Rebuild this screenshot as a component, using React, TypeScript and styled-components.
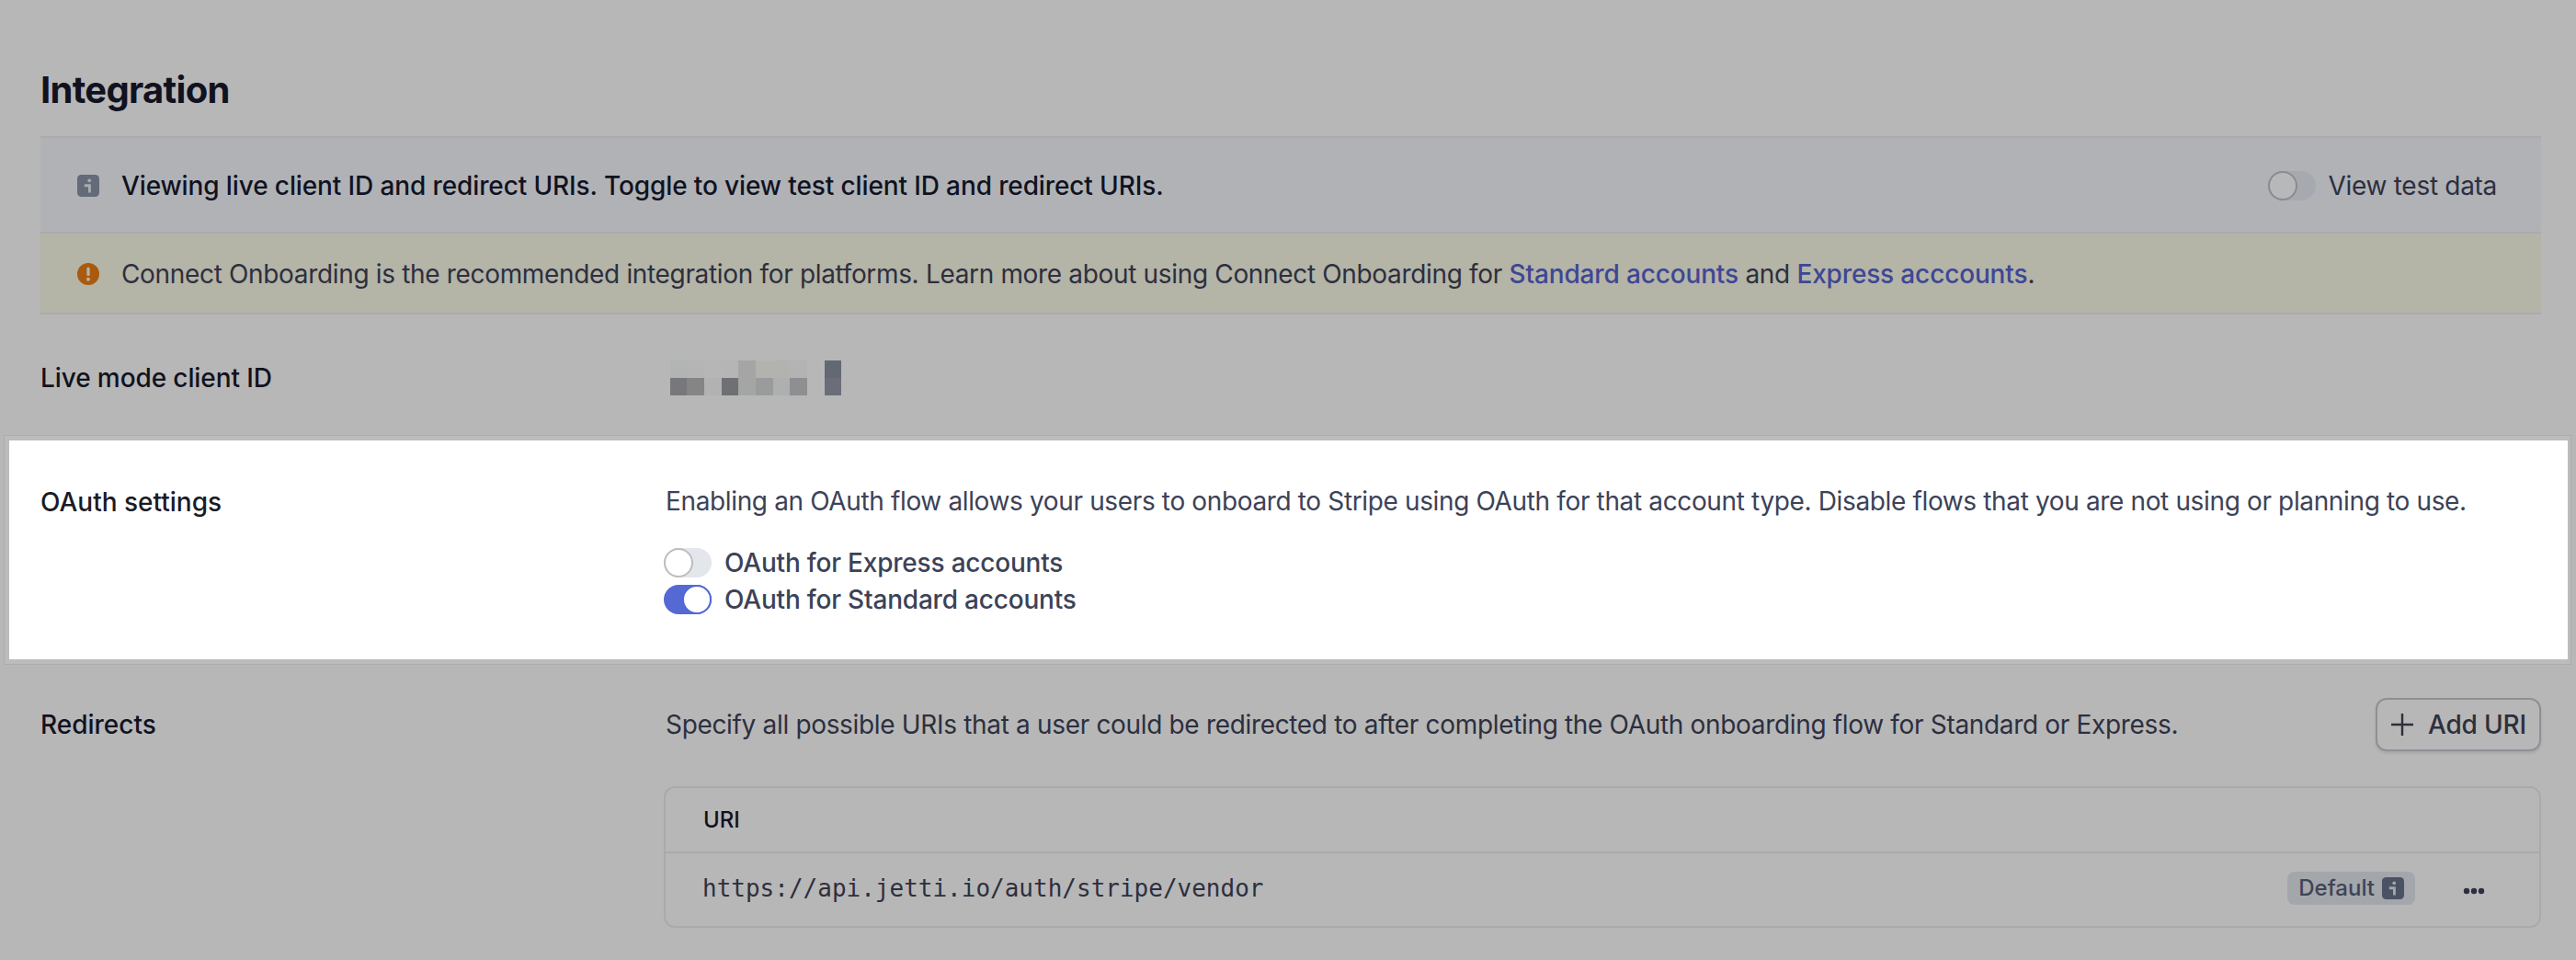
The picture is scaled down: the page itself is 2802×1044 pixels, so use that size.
import React from 'react';
import styled, { createGlobalStyle } from 'styled-components';

const GlobalStyle = createGlobalStyle`
  html, body {
    margin: 0;
    padding: 0;
    background: #b7b7b7;
    overflow: hidden;
  }
  *, *::before, *::after {
    box-sizing: border-box;
  }
`;

const Page = styled.div`
  width: 2802px;
  height: 1044px;
  overflow: hidden;
  font-family: Inter, 'Liberation Sans', sans-serif;
  font-size: 28px;
  line-height: 40px;
  color: #2d2f3e;
  background: #b7b7b7;
`;

const Section = styled.div`
  padding: 0 38px 0 44px;
`;

const Title = styled.h1`
  margin: 0;
  height: 148px;
  padding-top: 74px;
  font-size: 40px;
  line-height: 48px;
  font-weight: 700;
  letter-spacing: -0.7px;
  color: #11121f;
`;

const Banner = styled.div<{ $bg: string; $height: number }>`
  display: flex;
  align-items: center;
  height: ${(p) => p.$height}px;
  padding: 2px 48px 0 40px;
  background: ${(p) => p.$bg};
  border-top: 2px solid #aaaab0;
`;

const BannerIcon = styled.svg`
  width: 24px;
  height: 24px;
  flex: none;
  margin-right: 24px;
`;

const BannerText = styled.span<{ $strong?: boolean }>`
  flex: 1;
  font-weight: ${(p) => (p.$strong ? 500 : 400)};
  letter-spacing: ${(p) => (p.$strong ? '-0.12px' : '-0.335px')};
  color: ${(p) => (p.$strong ? '#11121f' : '#2d2f3e')};
`;

const BannerLink = styled.span`
  font-weight: 500;
  letter-spacing: -0.15px;
  color: #3e4794;
`;

const BannerEnd = styled.div`
  height: 2px;
  background: #aaaab0;
`;

const Switch = styled.span<{ $on?: boolean; $track: string; $knob: string; $ring: string }>`
  position: relative;
  display: block;
  flex: none;
  width: 52px;
  height: 32px;
  border-radius: 16px;
  background: ${(p) => p.$track};

  &::after {
    content: '';
    position: absolute;
    top: 0;
    left: ${(p) => (p.$on ? '20px' : '0')};
    width: 32px;
    height: 32px;
    border-radius: 50%;
    background: ${(p) => p.$knob};
    border: 2px solid ${(p) => p.$ring};
  }
`;

const SwitchRow = styled.div`
  display: flex;
  align-items: center;
  gap: 14px;
  height: 32px;
  white-space: nowrap;
  letter-spacing: -0.3px;
`;

const ClientRow = styled.div`
  display: grid;
  grid-template-columns: 678px 1fr;
  align-items: center;
  height: 137px;
  font-weight: 500;
  letter-spacing: -0.1px;
  color: #11121f;
`;

const Blur = styled.div`
  display: grid;
  grid-template-columns: 18px 19px 19px 18px 19px 19px 18px 19px 19px 18px;
  grid-auto-rows: 19px;
  margin-left: 7px;
`;

const BlurCell = styled.span<{ $color: string }>`
  background: ${(p) => p.$color};
`;

const Panel = styled.div`
  display: grid;
  grid-template-columns: 678px 1fr;
  margin: 0 9px 0 10px;
  padding: 47px 34px 49px;
  background: #fff;
  box-shadow:
    -1px 0 0 4px #bcbcbc,
    -1px 1px 0 4px #bcbcbc,
    -1px -1px 0 4px #bcbcbc,
    -1px 1px 0 5px #acacac,
    -1px -1px 0 5px #acacac;
`;

const PanelLabel = styled.div`
  font-weight: 500;
  color: #1a1b25;
`;

const PanelText = styled.div`
  margin-top: -1px;
  padding-left: 2px;
  letter-spacing: -0.36px;
  color: #3c4257;
  white-space: nowrap;
`;

const SwitchList = styled.div`
  display: flex;
  flex-direction: column;
  gap: 8px;
  margin-top: 31px;
  font-weight: 500;
  color: #3c4257;
`;

const SwitchLabel = styled.span`
  letter-spacing: -0.2px;
`;

const Redirects = styled.div`
  display: grid;
  grid-template-columns: 678px 1fr;
  margin-top: 42px;
`;

const RedirectLabel = styled.div`
  padding-top: 9px;
  font-weight: 500;
  color: #11121f;
`;

const RedirectHead = styled.div`
  display: flex;
  align-items: center;
  justify-content: space-between;
  height: 58px;
  padding-left: 2px;
  letter-spacing: -0.33px;
  white-space: nowrap;
`;

const AddButton = styled.button`
  display: flex;
  align-items: center;
  gap: 16px;
  width: 180px;
  height: 58px;
  padding: 0 0 0 15px;
  font: 500 28px/40px Inter, 'Liberation Sans', sans-serif;
  letter-spacing: -0.2px;
  color: #2d2f3e;
  background: transparent;
  border: 2px solid #8f9096;
  border-radius: 12px;
  box-shadow: 0 2px 3px rgba(0, 0, 0, 0.1);
`;

const Table = styled.div`
  margin-top: 38px;
  border: 2px solid #aaaaaa;
  border-radius: 12px;
`;

const TableHead = styled.div`
  display: flex;
  align-items: center;
  height: 71px;
  padding-left: 41px;
  font-size: 24px;
  font-weight: 500;
  color: #11121f;
  border-bottom: 2px solid #aaaaaa;
`;

const TableRow = styled.div`
  display: flex;
  align-items: center;
  height: 79px;
  padding: 0 59px 3px 40px;
`;

const Uri = styled.span`
  flex: 1;
  font-family: 'DejaVu Sans Mono', 'Liberation Mono', monospace;
  font-size: 26px;
  color: #2d2f3e;
`;

const Badge = styled.span`
  display: flex;
  align-items: center;
  gap: 8px;
  height: 36px;
  padding: 0 12px;
  font-size: 24px;
  font-weight: 500;
  color: #3f4456;
  background: #a3a6ab;
  border-radius: 8px;
`;

const BadgeIcon = styled.svg`
  width: 24px;
  height: 24px;
`;

const MoreIcon = styled.svg`
  width: 24px;
  height: 8px;
  margin-top: 6px;
  margin-left: 52px;
`;

const InfoGlyph = ({ fill, mark }: { fill: string; mark: string }) => (
  <>
    <rect width="16" height="16" rx="3" fill={fill} />
    <circle cx="8.8" cy="4.2" r="1.25" fill={mark} />
    <path d="M5.2 6.9h4.7v6.1H8V8.8H5.2z" fill={mark} />
  </>
);

const blurCells = [
  '#b2b4b3', '#b4b4b4', '#b6b6b6', '#b5b5b5', '#a5a5a6', '#b3b3ae', '#b2b2ae', '#b3b3b3', '#b7b7b7', '#636973',
  '#78787c', '#858585', '#b2b2b2', '#6f7073', '#a4a6a3', '#9a9b9d', '#aeb0af', '#8e8f91', '#b7b7b7', '#6b6e79',
];

const App = () => {
  return (
    <Page>
      <GlobalStyle />
      <Section>
        <Title>Integration</Title>
        <Banner $bg="#b0b2b6" $height={104}>
          <BannerIcon viewBox="0 0 16 16">
            <InfoGlyph fill="#636a78" mark="#a9acb0" />
          </BannerIcon>
          <BannerText $strong>
            Viewing live client ID and redirect URIs. Toggle to view test client ID and redirect URIs.
          </BannerText>
          <SwitchRow>
            <Switch $track="#a6a9af" $knob="#b7b8b9" $ring="#8a8b8f" />
            <span>View test data</span>
          </SwitchRow>
        </Banner>
        <Banner $bg="#b4b4a7" $height={88}>
          <BannerIcon viewBox="0 0 16 16">
            <circle cx="8" cy="8" r="8" fill="#aa5a0e" />
            <rect x="6.9" y="3" width="2.2" height="6.4" rx="1.1" fill="#b4b4a7" />
            <circle cx="8" cy="11.8" r="1.3" fill="#b4b4a7" />
          </BannerIcon>
          <BannerText>
            Connect Onboarding is the recommended integration for platforms. Learn more about using Connect Onboarding
            for <BannerLink>Standard accounts</BannerLink> and <BannerLink>Express acccounts</BannerLink>.
          </BannerText>
        </Banner>
        <BannerEnd />
        <ClientRow>
          <span>Live mode client ID</span>
          <Blur>
            {blurCells.map((color, i) => (
              <BlurCell key={i} $color={color} />
            ))}
          </Blur>
        </ClientRow>
      </Section>
      <Panel>
        <PanelLabel>OAuth settings</PanelLabel>
        <div>
          <PanelText>
            Enabling an OAuth flow allows your users to onboard to Stripe using OAuth for that account type. Disable
            flows that you are not using or planning to use.
          </PanelText>
          <SwitchList>
            <SwitchRow>
              <Switch $track="#e3e6eb" $knob="#ffffff" $ring="#bdbdbf" />
              <SwitchLabel>OAuth for Express accounts</SwitchLabel>
            </SwitchRow>
            <SwitchRow>
              <Switch $on $track="#5469d4" $knob="#ffffff" $ring="#5469d4" />
              <SwitchLabel>OAuth for Standard accounts</SwitchLabel>
            </SwitchRow>
          </SwitchList>
        </div>
      </Panel>
      <Section>
        <Redirects>
          <RedirectLabel>Redirects</RedirectLabel>
          <div>
            <RedirectHead>
              <span>
                Specify all possible URIs that a user could be redirected to after completing the OAuth onboarding flow
                for Standard or Express.
              </span>
              <AddButton>
                <svg width="24" height="24" viewBox="0 0 24 24" fill="none">
                  <path d="M12 0v24M0 12h24" stroke="#2d2f3e" strokeWidth="2.4" />
                </svg>
                Add URI
              </AddButton>
            </RedirectHead>
            <Table>
              <TableHead>URI</TableHead>
              <TableRow>
                <Uri>https://api.jetti.io/auth/stripe/vendor</Uri>
                <Badge>
                  Default
                  <BadgeIcon viewBox="0 0 16 16">
                    <InfoGlyph fill="#4b5263" mark="#a3a6ab" />
                  </BadgeIcon>
                </Badge>
                <MoreIcon viewBox="0 0 24 8">
                  <circle cx="4" cy="4" r="3.2" fill="#2d2f3e" />
                  <circle cx="12" cy="4" r="3.2" fill="#2d2f3e" />
                  <circle cx="20" cy="4" r="3.2" fill="#2d2f3e" />
                </MoreIcon>
              </TableRow>
            </Table>
          </div>
        </Redirects>
      </Section>
    </Page>
  );
};

export default App;
